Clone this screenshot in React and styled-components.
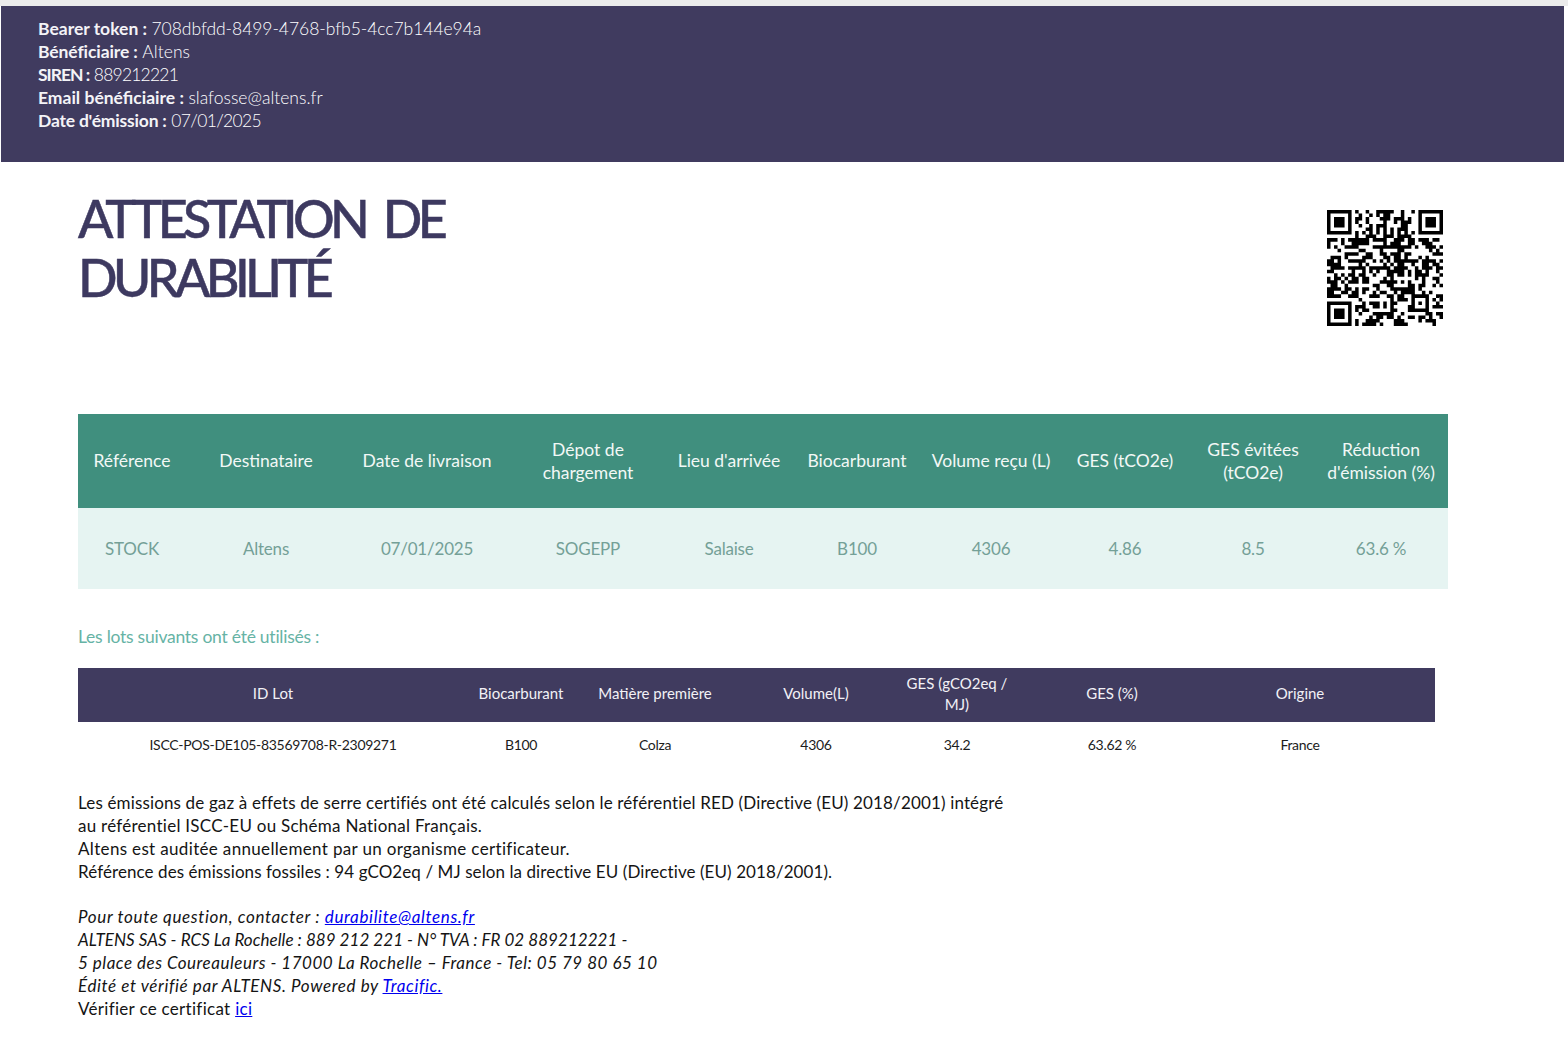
import React from 'react';
import styled, { createGlobalStyle } from 'styled-components';

const GlobalStyle = createGlobalStyle`
  html, body {
    margin: 0;
    padding: 0;
    background: #fff;
  }
  body {
    font-family: 'Lato', 'Open Sans', sans-serif;
    color: #111;
  }
`;

const TopStrip = styled.div`
  height: 6px;
  background: #ebebeb;
`;

const Banner = styled.header`
  height: 156px;
  box-sizing: border-box;
  margin: 0 4px 0 1px;
  padding: 11px 37px;
  background: #403b5f;
  color: #f4f3f7;
  font-size: 17.5px;
  line-height: 23px;
`;

const BannerLabel = styled.span`
  font-weight: 700;
  letter-spacing: ${p => p.$track}px;
`;

const BannerValue = styled.span`
  font-weight: 300;
  color: #fff;
  letter-spacing: ${p => p.$track}px;
`;

const Main = styled.main`
  width: 1370px;
  margin-left: 78px;
`;

const TitleRow = styled.div`
  height: 252px;
  display: flex;
  justify-content: space-between;
  align-items: flex-start;
`;

const Title = styled.h1`
  margin: 27px 0 0;
  font-size: 52px;
  line-height: 59px;
  font-weight: 500;
  letter-spacing: -4.6px;
  word-spacing: 9px;
  -webkit-text-stroke: 0.5px #3d3960;
  width: 440px;
  color: #3d3960;
`;

const QrBox = styled.svg`
  display: block;
  width: 116px;
  height: 116px;
  margin: 48px 5px 0 0;
`;

const Table = styled.table`
  border-collapse: collapse;
  table-layout: fixed;
  width: ${p => p.$width}px;
`;

const BigHead = styled.th`
  width: ${p => p.$w}px;
  height: 94px;
  box-sizing: border-box;
  padding: 0 0 1px;
  background: #408f7e;
  color: #f2f8f6;
  font-size: 17.5px;
  line-height: 23px;
  font-weight: 400;
  text-align: center;
`;

const BigCell = styled.td`
  height: 81px;
  padding: 0;
  background: #e6f4f2;
  color: #74a097;
  font-size: 17px;
  font-weight: 400;
  letter-spacing: -0.2px;
  text-align: center;
`;

const SectionTitle = styled.h2`
  margin: 36px 0 20px;
  font-size: 17.5px;
  line-height: 23px;
  font-weight: 400;
  letter-spacing: -0.25px;
  color: #66b3a5;
`;

const LotHead = styled.th`
  width: ${p => p.$w}px;
  height: 54px;
  box-sizing: border-box;
  padding: 0 ${p => p.$pr || 8}px 3px ${p => (p.$pr ? 0 : 8)}px;
  background: #403b5f;
  color: #f2f1f6;
  font-size: 15px;
  line-height: 21px;
  font-weight: 400;
  text-align: center;
`;

const LotCell = styled.td`
  height: 46px;
  box-sizing: border-box;
  padding: 0 ${p => p.$pr || 0}px 2px 0;
  color: #1c1c1c;
  font-size: 14px;
  letter-spacing: -0.3px;
  text-align: center;
`;

const Notes = styled.section`
  margin-top: 23px;
  font-size: 17px;
  line-height: 23px;
  color: #141414;
`;

const NoteLine = styled.div`
  letter-spacing: ${p => p.$track}px;
`;

const Legal = styled.div`
  margin-top: 22px;
  font-style: italic;
`;

const PlainLine = styled.div`
  font-style: normal;
  letter-spacing: 0.3px;
`;

const PageLink = styled.a`
  color: #0000ee;
  text-decoration: underline;
`;

// fake-ish matrix: finders + timing are right, the data area is seeded noise
const SIZE = 33;

function buildQrPath() {
  const cells = [];
  let seed = 708;
  for (let y = 0; y < SIZE; y++) {
    const row = [];
    for (let x = 0; x < SIZE; x++) {
      seed = (seed * 1103515245 + 12345) & 0x7fffffff;
      row.push(((seed >> 16) & 255) < 130);
    }
    cells.push(row);
  }
  const finder = (ox, oy) => {
    for (let y = -1; y < 8; y++) {
      for (let x = -1; x < 8; x++) {
        const cx = ox + x;
        const cy = oy + y;
        if (cx < 0 || cy < 0 || cx >= SIZE || cy >= SIZE) continue;
        const ring = x >= 0 && x <= 6 && y >= 0 && y <= 6 && (x === 0 || x === 6 || y === 0 || y === 6);
        const core = x >= 2 && x <= 4 && y >= 2 && y <= 4;
        cells[cy][cx] = ring || core;
      }
    }
  };
  finder(0, 0);
  finder(SIZE - 7, 0);
  finder(0, SIZE - 7);
  for (let i = 8; i < SIZE - 8; i++) {
    cells[6][i] = i % 2 === 0;
    cells[i][6] = i % 2 === 0;
  }
  for (let y = -2; y <= 2; y++) {
    for (let x = -2; x <= 2; x++) {
      const edge = Math.max(Math.abs(x), Math.abs(y));
      cells[26 + y][26 + x] = edge !== 1;
    }
  }
  let d = '';
  cells.forEach((row, y) => row.forEach((on, x) => {
    if (on) d += `M${x} ${y}h1v1h-1z`;
  }));
  return d;
}

const QR_PATH = buildQrPath();

const mainHeads = [
  ['Référence', 108], ['Destinataire', 160], ['Date de livraison', 162],
  ['Dépot de chargement', 160], ["Lieu d'arrivée", 122], ['Biocarburant', 134],
  ['Volume reçu (L)', 134], ['GES (tCO2e)', 134], ['GES évitées (tCO2e)', 122],
  ["Réduction d'émission (%)", 134],
];
const mainRow = ['STOCK', 'Altens', '07/01/2025', 'SOGEPP', 'Salaise', 'B100', '4306', '4.86', '8.5', '63.6 %'];

const lotHeads = [
  ['ID Lot', 390], ['Biocarburant', 106], ['Matière première', 162], ['Volume(L)', 160],
  ['GES (gCO2eq / MJ)', 122], ['GES (%)', 188], ['Origine', 229, 41],
];
const lotRow = ['ISCC-POS-DE105-83569708-R-2309271', 'B100', 'Colza', '4306', '34.2', '63.62 %', 'France'];

const bannerRows = [
  ['Bearer token :', '708dbfdd-8499-4768-bfb5-4cc7b144e94a', 0, -0.05],
  ['Bénéficiaire :', 'Altens', -0.1, 0.08],
  ['SIREN :', '889212221', -1, -0.8],
  ['Email bénéficiaire :', 'slafosse@altens.fr', 0, 0],
  ["Date d'émission :", '07/01/2025', -0.2, -0.65],
];

export default function App() {
  return (
    <>
      <GlobalStyle />
      <TopStrip />
      <Banner>
        {bannerRows.map(([label, value, labelTrack, valueTrack]) => (
          <div key={label}>
            <BannerLabel $track={labelTrack}>{label}</BannerLabel> <BannerValue $track={valueTrack}>{value}</BannerValue>
          </div>
        ))}
      </Banner>
      <Main>
        <TitleRow>
          <Title>ATTESTATION DE DURABILITÉ</Title>
          <QrBox viewBox={`0 0 ${SIZE} ${SIZE}`}>
            <path d={QR_PATH} fill="#000" />
          </QrBox>
        </TitleRow>

        <Table $width={1370}>
          <thead>
            <tr>
              {mainHeads.map(([label, w]) => <BigHead key={label} $w={w}>{label}</BigHead>)}
            </tr>
          </thead>
          <tbody>
            <tr>
              {mainRow.map((v, i) => <BigCell key={i}>{v}</BigCell>)}
            </tr>
          </tbody>
        </Table>

        <SectionTitle>Les lots suivants ont été utilisés :</SectionTitle>

        <Table $width={1357}>
          <thead>
            <tr>
              {lotHeads.map(([label, w, pr]) => <LotHead key={label} $w={w} $pr={pr}>{label}</LotHead>)}
            </tr>
          </thead>
          <tbody>
            <tr>
              {lotRow.map((v, i) => <LotCell key={i} $pr={lotHeads[i][2]}>{v}</LotCell>)}
            </tr>
          </tbody>
        </Table>

        <Notes>
          <NoteLine $track={0.15}>Les émissions de gaz à effets de serre certifiés ont été calculés selon le référentiel RED (Directive (EU) 2018/2001) intégré</NoteLine>
          <NoteLine $track={0.26}>au référentiel ISCC-EU ou Schéma National Français.</NoteLine>
          <NoteLine $track={0.34}>Altens est auditée annuellement par un organisme certificateur.</NoteLine>
          <NoteLine $track={0.08}>Référence des émissions fossiles : 94 gCO2eq / MJ selon la directive EU (Directive (EU) 2018/2001).</NoteLine>
          <Legal>
            <NoteLine $track={0.65}>Pour toute question, contacter : <PageLink href="#">durabilite@altens.fr</PageLink></NoteLine>
            <NoteLine $track={0.04}>ALTENS SAS - RCS La Rochelle : 889 212 221 - N° TVA : FR 02 889212221 -</NoteLine>
            <NoteLine $track={0.5}>5 place des Coureauleurs - 17000 La Rochelle – France - Tel: 05 79 80 65 10</NoteLine>
            <NoteLine $track={0.6}>Édité et vérifié par ALTENS. Powered by <PageLink href="#">Tracific.</PageLink></NoteLine>
            <PlainLine>Vérifier ce certificat <PageLink href="#">ici</PageLink></PlainLine>
          </Legal>
        </Notes>
      </Main>
    </>
  );
}
